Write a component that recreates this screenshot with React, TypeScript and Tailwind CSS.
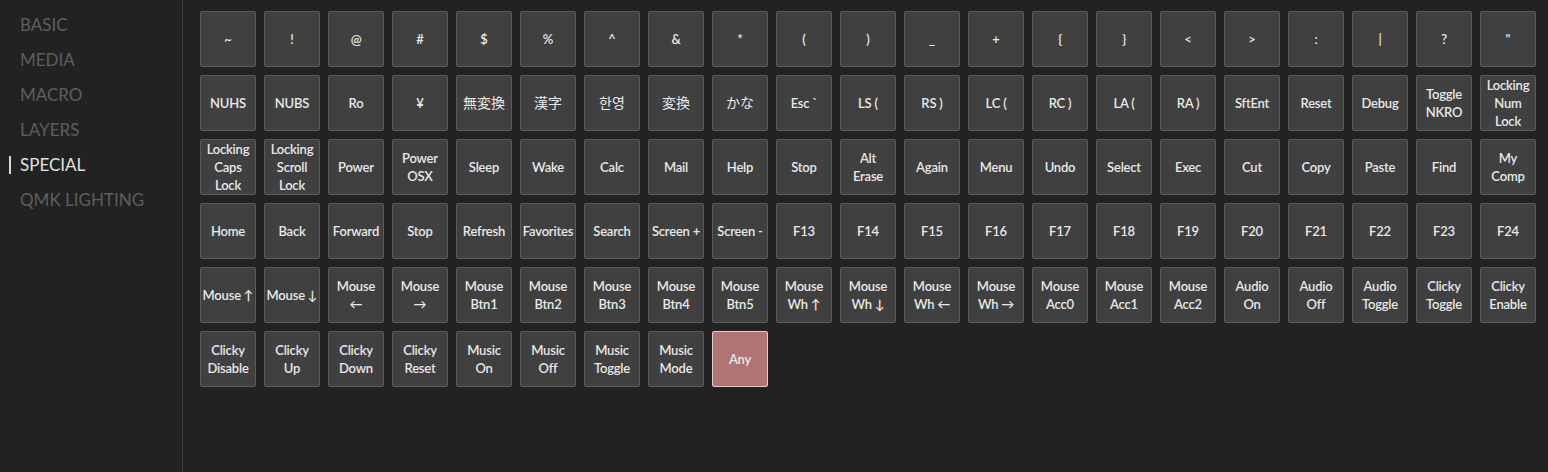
import * as React from "react"

const menu = ["Basic", "Media", "Macro", "Layers", "Special", "QMK Lighting"]

const rows: string[][] = [
  ["~", "!", "@", "#", "$", "%", "^", "&", "*", "(", ")", "_", "+", "{", "}", "<", ">", ":", "|", "?", "\""],
  ["NUHS", "NUBS", "Ro", "¥", "無変換", "漢字", "한영", "変換", "かな", "Esc `", "LS (", "RS )", "LC (", "RC )", "LA (", "RA )", "SftEnt", "Reset", "Debug", "Toggle\nNKRO", "Locking\nNum\nLock"],
  ["Locking\nCaps\nLock", "Locking\nScroll\nLock", "Power", "Power\nOSX", "Sleep", "Wake", "Calc", "Mail", "Help", "Stop", "Alt\nErase", "Again", "Menu", "Undo", "Select", "Exec", "Cut", "Copy", "Paste", "Find", "My\nComp"],
  ["Home", "Back", "Forward", "Stop", "Refresh", "Favorites", "Search", "Screen +", "Screen -", "F13", "F14", "F15", "F16", "F17", "F18", "F19", "F20", "F21", "F22", "F23", "F24"],
  ["Mouse ↑", "Mouse ↓", "Mouse\n←", "Mouse\n→", "Mouse\nBtn1", "Mouse\nBtn2", "Mouse\nBtn3", "Mouse\nBtn4", "Mouse\nBtn5", "Mouse\nWh ↑", "Mouse\nWh ↓", "Mouse\nWh ←", "Mouse\nWh →", "Mouse\nAcc0", "Mouse\nAcc1", "Mouse\nAcc2", "Audio\nOn", "Audio\nOff", "Audio\nToggle", "Clicky\nToggle", "Clicky\nEnable"],
  ["Clicky\nDisable", "Clicky\nUp", "Clicky\nDown", "Clicky\nReset", "Music\nOn", "Music\nOff", "Music\nToggle", "Music\nMode", "Any"],
]

const cjk = /[\u3040-\u30ff\u4e00-\u9fff\uac00-\ud7af]/

function Key({ label }: { label: string }) {
  const any = label === "Any"
  const isCjk = cjk.test(label)
  return (
    <div
      className={
        "flex h-14 w-14 flex-col items-center justify-center rounded-[2px] border text-center leading-[18px] text-[#e8e8e8] " +
        (any ? "border-[#e6c9c9] bg-[#b07474]" : "border-[#5c5c5c] bg-[#404040]") +
        (isCjk ? " text-[14px] font-normal" : " text-[13px] font-semibold tracking-[-0.2px]")
      }
    >
      {label.split("\n").map((l, i) => (
        <span key={i} className="whitespace-nowrap">{l}</span>
      ))}
    </div>
  )
}

export default function App() {
  return (
    <div
      className="flex h-[472px] w-full overflow-hidden bg-[#222222]"
      style={{ fontFamily: "Lato, 'Noto Sans CJK JP', 'Noto Sans CJK KR', sans-serif" }}
    >
      <nav className="flex w-[183px] shrink-0 flex-col border-r border-[#3c3c3c] pt-[7px]">
        {menu.map((m) => {
          const active = m === "Special"
          return (
            <div key={m} className="flex h-[35px] items-center">
              <div className={"ml-[9px] h-[18px] w-[2px] " + (active ? "bg-[#d8d8d8]" : "bg-transparent")} />
              <span
                className={
                  "ml-[9px] text-[17px] uppercase " + (active ? "text-[#e0e0e0]" : "text-[#5e5e5e]")
                }
              >
                {m}
              </span>
            </div>
          )
        })}
      </nav>
      <main className="pl-[17px] pt-[11px]">
        <div className="grid grid-cols-[repeat(21,56px)] gap-2">
          {rows.flat().map((k, i) => (
            <Key key={i} label={k} />
          ))}
        </div>
      </main>
    </div>
  )
}
